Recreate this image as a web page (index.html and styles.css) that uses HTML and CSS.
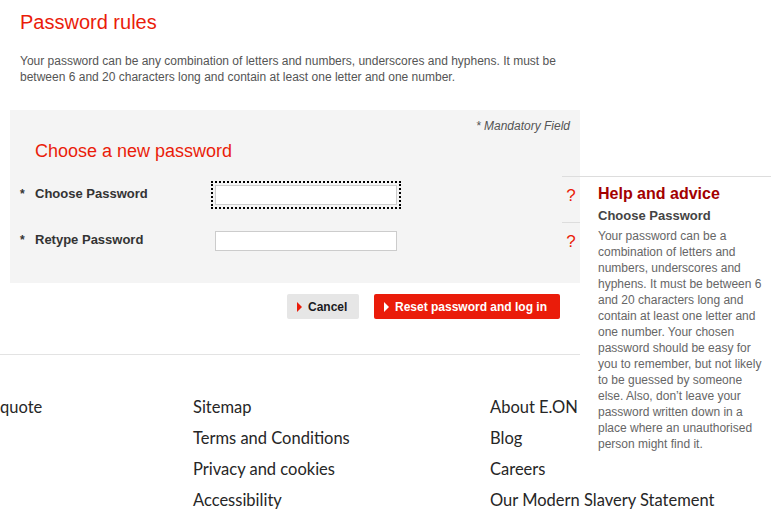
FILE: index.html
```
<!DOCTYPE html>
<html lang="en">
<head>
<meta charset="utf-8">
<title>Password rules</title>
<link rel="stylesheet" href="styles.css">
</head>
<body>
<main class="page">
  <h1 class="title">Password rules</h1>
  <p class="rules">Your password can be any combination of letters and numbers, underscores and hyphens. It must be between 6 and 20 characters long and contain at least one letter and one number.</p>
  <section class="panel">
    <p class="mandatory">* Mandatory Field</p>
    <h2 class="panel-title">Choose a new password</h2>
    <div class="row">
      <span class="req">*</span>
      <label class="label" for="pw1">Choose Password</label>
      <div class="field-cell"><input id="pw1" class="field field-focus" type="password"></div>
      <span class="qmark">?</span>
    </div>
    <div class="row">
      <span class="req">*</span>
      <label class="label" for="pw2">Retype Password</label>
      <div class="field-cell"><input id="pw2" class="field" type="password"></div>
      <span class="qmark">?</span>
    </div>
  </section>
  <div class="actions">
    <button class="btn btn-cancel" type="button"><span class="arrow"></span>Cancel</button>
    <button class="btn btn-primary" type="button"><span class="arrow"></span>Reset password and log in</button>
  </div>
</main>
<aside class="help">
  <h3 class="help-title">Help and advice</h3>
  <h4 class="help-sub">Choose Password</h4>
  <p class="help-text">Your password can be a combination of letters and numbers, underscores and hyphens. It must be between 6 and 20 characters long and contain at least one letter and one number. Your chosen password should be easy for you to remember, but not likely to be guessed by someone else. Also, don’t leave your password written down in a place where an unauthorised person might find it.</p>
</aside>
<footer class="footer">
  <ul class="foot-col foot-col-1">
    <li>quote</li>
  </ul>
  <ul class="foot-col foot-col-2">
    <li>Sitemap</li>
    <li>Terms and Conditions</li>
    <li>Privacy and cookies</li>
    <li>Accessibility</li>
  </ul>
  <ul class="foot-col foot-col-3">
    <li>About E.ON</li>
    <li>Blog</li>
    <li>Careers</li>
    <li>Our Modern Slavery Statement</li>
  </ul>
</footer>
</body>
</html>
```
FILE: styles.css
```
html, body {
  margin: 0;
  padding: 0;
  background: #fff;
}
body {
  font-family: "Liberation Sans", Arial, sans-serif;
  width: 771px;
  height: 520px;
  overflow: hidden;
  position: relative;
}
.page {
  width: 580px;
  padding-left: 10px;
  box-sizing: border-box;
}
.title {
  margin: 0;
  padding: 11px 0 0 10px;
  font-size: 20px;
  line-height: 23px;
  font-weight: normal;
  color: #ea1c0a;
}
.rules {
  margin: 19px 0 0 0;
  padding-left: 10px;
  width: 545px;
  font-size: 12px;
  line-height: 16px;
  color: #555;
}
.panel {
  margin-top: 25px;
  background: #f4f4f4;
  padding: 8px 0 15px 10px;
}
.mandatory {
  margin: 0;
  padding-right: 10px;
  text-align: right;
  font-size: 12px;
  line-height: 16px;
  font-style: italic;
  color: #555;
}
.panel-title {
  margin: 7px 0 14px 15px;
  font-size: 18px;
  line-height: 21px;
  font-weight: normal;
  color: #ea1c0a;
}
.row {
  display: grid;
  grid-template-columns: 15px 180px 347px 18px;
  height: 46px;
  align-items: start;
}
.req, .label {
  margin-top: 8px;
  font-size: 13px;
  line-height: 20px;
  font-weight: bold;
  color: #333;
}
.req {
  font-size: 12px;
}
.field-cell {
  padding-top: 9px;
}
.field {
  display: block;
  box-sizing: border-box;
  width: 182px;
  height: 20px;
  margin: 0;
  border: 1px solid #ccc;
  background: #fff;
  padding: 0 3px;
}
.field-focus {
  outline: 2px dotted #000;
  outline-offset: 2px;
}
.qmark {
  height: 46px;
  box-sizing: border-box;
  border-top: 1px solid #ddd;
  padding-top: 9px;
  text-align: center;
  font-size: 17px;
  line-height: 20px;
  color: #ea1c0a;
}
.actions {
  display: flex;
  justify-content: flex-end;
  gap: 15px;
  margin-top: 11px;
  padding-right: 20px;
}
.btn {
  display: flex;
  align-items: center;
  height: 25px;
  box-sizing: border-box;
  border: none;
  border-radius: 2px;
  font-family: "Liberation Sans", Arial, sans-serif;
  font-size: 12px;
  font-weight: bold;
  padding: 0 11px 0 10px;
  cursor: pointer;
}
.arrow {
  width: 0;
  height: 0;
  border-top: 5px solid transparent;
  border-bottom: 5px solid transparent;
  border-left: 5px solid currentColor;
  margin-right: 6px;
}
.btn-cancel {
  background: #e6e6e6;
  color: #1a1a22;
  width: 72px;
}
.btn-cancel .arrow {
  border-left-color: #ea1c0a;
}
.btn-primary {
  background: #ea1c0a;
  color: #fff;
  width: 186px;
}
.help {
  position: absolute;
  left: 580px;
  top: 176px;
  width: 191px;
  box-sizing: border-box;
  border-top: 1px solid #ddd;
  background: #fff;
  padding: 7px 6px 6px 18px;
  z-index: 2;
}
.help::before {
  content: "";
  position: absolute;
  left: -18px;
  top: -1px;
  width: 18px;
  border-top: 1px solid #ddd;
}
.help-title {
  margin: 0;
  font-size: 16px;
  line-height: 20px;
  font-weight: bold;
  color: #a30000;
}
.help-sub {
  margin: 3px 0 0 0;
  font-size: 13px;
  line-height: 18px;
  font-weight: bold;
  color: #444;
}
.help-text {
  margin: 3px 0 0 0;
  font-size: 12px;
  line-height: 16px;
  color: #666;
}
.footer {
  margin-top: 35px;
  border-top: 1px solid #e3e3e3;
  padding-top: 37px;
  display: grid;
  grid-template-columns: 193px 297px 1fr;
  font-family: Lato, "Liberation Sans", sans-serif;
  font-size: 16.5px;
  line-height: 31px;
  color: #262626;
}
.foot-col {
  list-style: none;
  margin: 0;
  padding: 0;
}
```
